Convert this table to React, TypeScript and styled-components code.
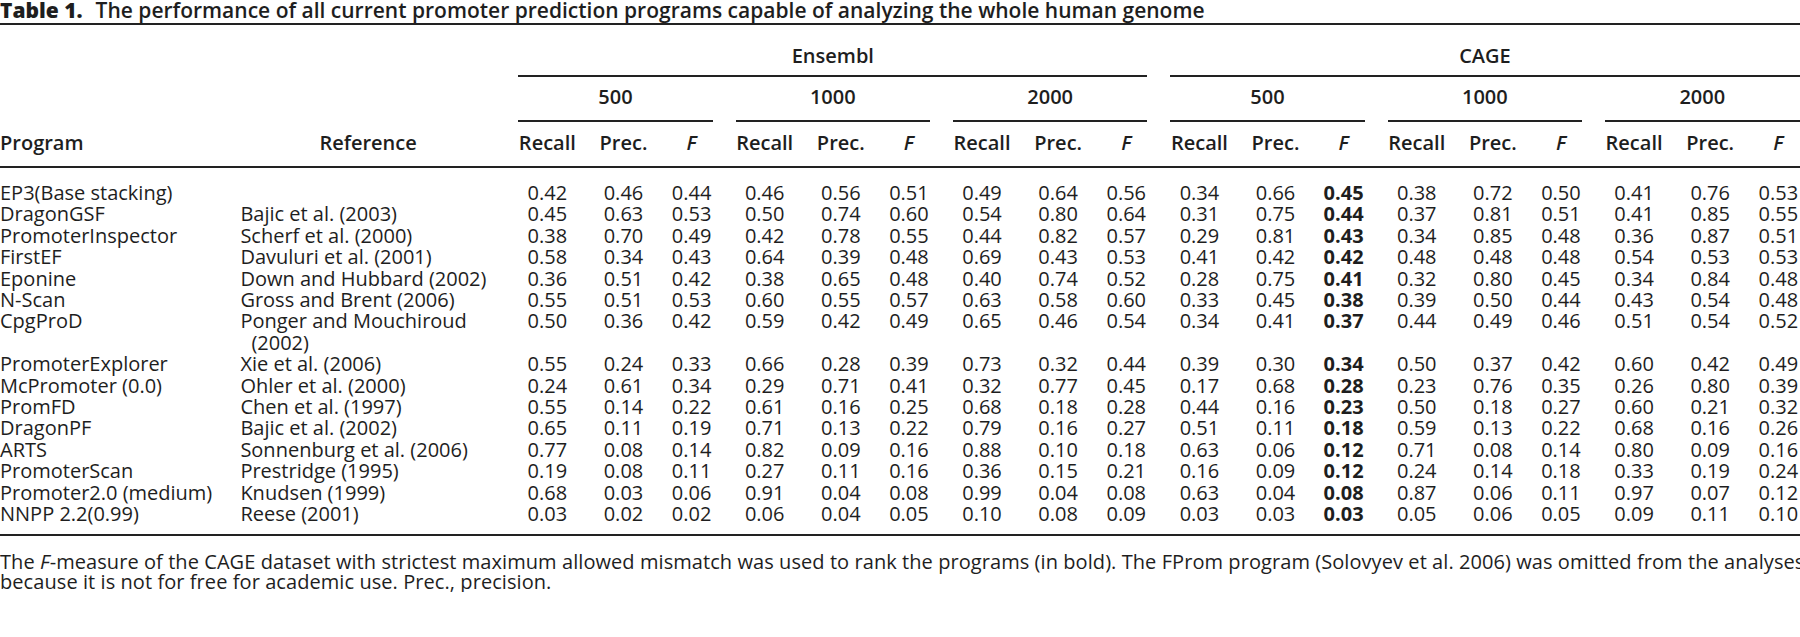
import styled, { createGlobalStyle } from "styled-components";

const GlobalStyle = createGlobalStyle`
  html, body {
    margin: 0;
    padding: 0;
    background: #fff;
    overflow: hidden;
  }
`;

const rows: [string, string, string][] = [
  ["EP3(Base stacking)", "", "0.42 0.46 0.44 0.46 0.56 0.51 0.49 0.64 0.56 0.34 0.66 0.45 0.38 0.72 0.50 0.41 0.76 0.53"],
  ["DragonGSF", "Bajic et al. (2003)", "0.45 0.63 0.53 0.50 0.74 0.60 0.54 0.80 0.64 0.31 0.75 0.44 0.37 0.81 0.51 0.41 0.85 0.55"],
  ["PromoterInspector", "Scherf et al. (2000)", "0.38 0.70 0.49 0.42 0.78 0.55 0.44 0.82 0.57 0.29 0.81 0.43 0.34 0.85 0.48 0.36 0.87 0.51"],
  ["FirstEF", "Davuluri et al. (2001)", "0.58 0.34 0.43 0.64 0.39 0.48 0.69 0.43 0.53 0.41 0.42 0.42 0.48 0.48 0.48 0.54 0.53 0.53"],
  ["Eponine", "Down and Hubbard (2002)", "0.36 0.51 0.42 0.38 0.65 0.48 0.40 0.74 0.52 0.28 0.75 0.41 0.32 0.80 0.45 0.34 0.84 0.48"],
  ["N-Scan", "Gross and Brent (2006)", "0.55 0.51 0.53 0.60 0.55 0.57 0.63 0.58 0.60 0.33 0.45 0.38 0.39 0.50 0.44 0.43 0.54 0.48"],
  ["CpgProD", "Ponger and Mouchiroud|(2002)", "0.50 0.36 0.42 0.59 0.42 0.49 0.65 0.46 0.54 0.34 0.41 0.37 0.44 0.49 0.46 0.51 0.54 0.52"],
  ["PromoterExplorer", "Xie et al. (2006)", "0.55 0.24 0.33 0.66 0.28 0.39 0.73 0.32 0.44 0.39 0.30 0.34 0.50 0.37 0.42 0.60 0.42 0.49"],
  ["McPromoter (0.0)", "Ohler et al. (2000)", "0.24 0.61 0.34 0.29 0.71 0.41 0.32 0.77 0.45 0.17 0.68 0.28 0.23 0.76 0.35 0.26 0.80 0.39"],
  ["PromFD", "Chen et al. (1997)", "0.55 0.14 0.22 0.61 0.16 0.25 0.68 0.18 0.28 0.44 0.16 0.23 0.50 0.18 0.27 0.60 0.21 0.32"],
  ["DragonPF", "Bajic et al. (2002)", "0.65 0.11 0.19 0.71 0.13 0.22 0.79 0.16 0.27 0.51 0.11 0.18 0.59 0.13 0.22 0.68 0.16 0.26"],
  ["ARTS", "Sonnenburg et al. (2006)", "0.77 0.08 0.14 0.82 0.09 0.16 0.88 0.10 0.18 0.63 0.06 0.12 0.71 0.08 0.14 0.80 0.09 0.16"],
  ["PromoterScan", "Prestridge (1995)", "0.19 0.08 0.11 0.27 0.11 0.16 0.36 0.15 0.21 0.16 0.09 0.12 0.24 0.14 0.18 0.33 0.19 0.24"],
  ["Promoter2.0 (medium)", "Knudsen (1999)", "0.68 0.03 0.06 0.91 0.04 0.08 0.99 0.04 0.08 0.63 0.04 0.08 0.87 0.06 0.11 0.97 0.07 0.12"],
  ["NNPP 2.2(0.99)", "Reese (2001)", "0.03 0.02 0.02 0.06 0.04 0.05 0.10 0.08 0.09 0.03 0.03 0.03 0.05 0.06 0.05 0.09 0.11 0.10"],
];

const windows = ["500", "1000", "2000"];
const groupCols = [81, 71, 65];

const App = () => {
  return (
    <Page>
      <GlobalStyle />
      <Title>
        <Label>Table 1.</Label>
        The performance of all current promoter prediction programs capable of analyzing the whole human genome
      </Title>
      <Table>
        <colgroup>
          <col style={{ width: 240 }} />
          <col style={{ width: 266 }} />
          {Array.from({ length: 18 }).map((_, i) => (
            <col key={i} style={{ width: groupCols[i % 3] }} />
          ))}
        </colgroup>
        <thead>
          <tr>
            <th colSpan={2} />
            <SpanHead colSpan={9} $top={20}>
              <SpanLabel $pb={8}>Ensembl</SpanLabel>
            </SpanHead>
            <SpanHead colSpan={9} $top={20}>
              <SpanLabel $pb={8}>CAGE</SpanLabel>
            </SpanHead>
          </tr>
          <tr>
            <th colSpan={2} />
            {[...windows, ...windows].map((w, i) => (
              <SpanHead key={i} colSpan={3} $top={9}>
                <SpanLabel $pb={12}>{w}</SpanLabel>
              </SpanHead>
            ))}
          </tr>
          <tr>
            <ColHead $align="left">Program</ColHead>
            <ColHead $align="left" $indent={79}>
              Reference
            </ColHead>
            {Array.from({ length: 6 }).map((_, g) => [
              <ColHead key={g + "r"}>Recall</ColHead>,
              <ColHead key={g + "p"}>Prec.</ColHead>,
              <ColHead key={g + "f"} $italic>
                F
              </ColHead>,
            ])}
          </tr>
        </thead>
        <tbody>
          {rows.map(([program, reference, values]) => {
            const [refMain, refRest] = reference.split("|");
            return (
              <tr key={program}>
                <TextCell>{program}</TextCell>
                <TextCell>
                  <Hanging>
                    {refMain}
                    {refRest && (
                      <>
                        <br />
                        {refRest}
                      </>
                    )}
                  </Hanging>
                </TextCell>
                {values.split(" ").map((v, i) => (
                  <NumCell key={i} $bold={i === 11}>
                    {v}
                  </NumCell>
                ))}
              </tr>
            );
          })}
        </tbody>
      </Table>
      <Footnote>
        The <i>F</i>-measure of the CAGE dataset with strictest maximum allowed mismatch was used to rank the
        programs (in bold). The FProm program (Solovyev et al. 2006) was omitted from the analyses
        <br />
        because it is not for free for academic use. Prec., precision.
      </Footnote>
    </Page>
  );
};

export default App;

const Page = styled.div`
  width: 1811px;
  font-family: "Open Sans", "Noto Sans", sans-serif;
  font-size: 20px;
  color: #1e1e1e;
`;

const Title = styled.div`
  height: 23px;
  font-size: 21px;
  line-height: 21px;
  font-weight: 600;
  white-space: nowrap;
  border-bottom: 2px solid #222;
`;

const Label = styled.span`
  font-weight: 800;
  margin-right: 13px;
`;

const Table = styled.table`
  width: 1811px;
  table-layout: fixed;
  border-collapse: separate;
  border-spacing: 0;
  font-size: 20px;

  tbody tr:first-child td {
    padding-top: 14px;
  }

  tbody tr:last-child td {
    padding-bottom: 9px;
    border-bottom: 2px solid #222;
  }
`;

const SpanHead = styled.th<{ $top: number }>`
  padding: ${({ $top }) => $top}px 11.5px 0;
  font-weight: 600;
  text-align: center;
`;

const SpanLabel = styled.div<{ $pb: number }>`
  line-height: 22px;
  padding-bottom: ${({ $pb }) => $pb}px;
  border-bottom: 2px solid #222;
`;

const ColHead = styled.th<{ $align?: string; $indent?: number; $italic?: boolean }>`
  padding: 10px 0 12px ${({ $indent }) => $indent ?? 0}px;
  line-height: 22px;
  font-weight: 600;
  font-style: ${({ $italic }) => ($italic ? "italic" : "normal")};
  text-align: ${({ $align }) => $align ?? "center"};
  border-bottom: 2px solid #222;
  white-space: nowrap;
`;

const TextCell = styled.td`
  padding: 0;
  line-height: 21.4px;
  text-align: left;
  vertical-align: top;
  white-space: nowrap;
`;

const Hanging = styled.div`
  padding-left: 11px;
  text-indent: -11px;
`;

const NumCell = styled.td<{ $bold: boolean }>`
  padding: 0;
  line-height: 21.4px;
  text-align: center;
  vertical-align: top;
  font-weight: ${({ $bold }) => ($bold ? 700 : 400)};
`;

const Footnote = styled.div`
  margin-top: 16px;
  line-height: 20px;
  letter-spacing: 0.07px;
  white-space: nowrap;
`;
